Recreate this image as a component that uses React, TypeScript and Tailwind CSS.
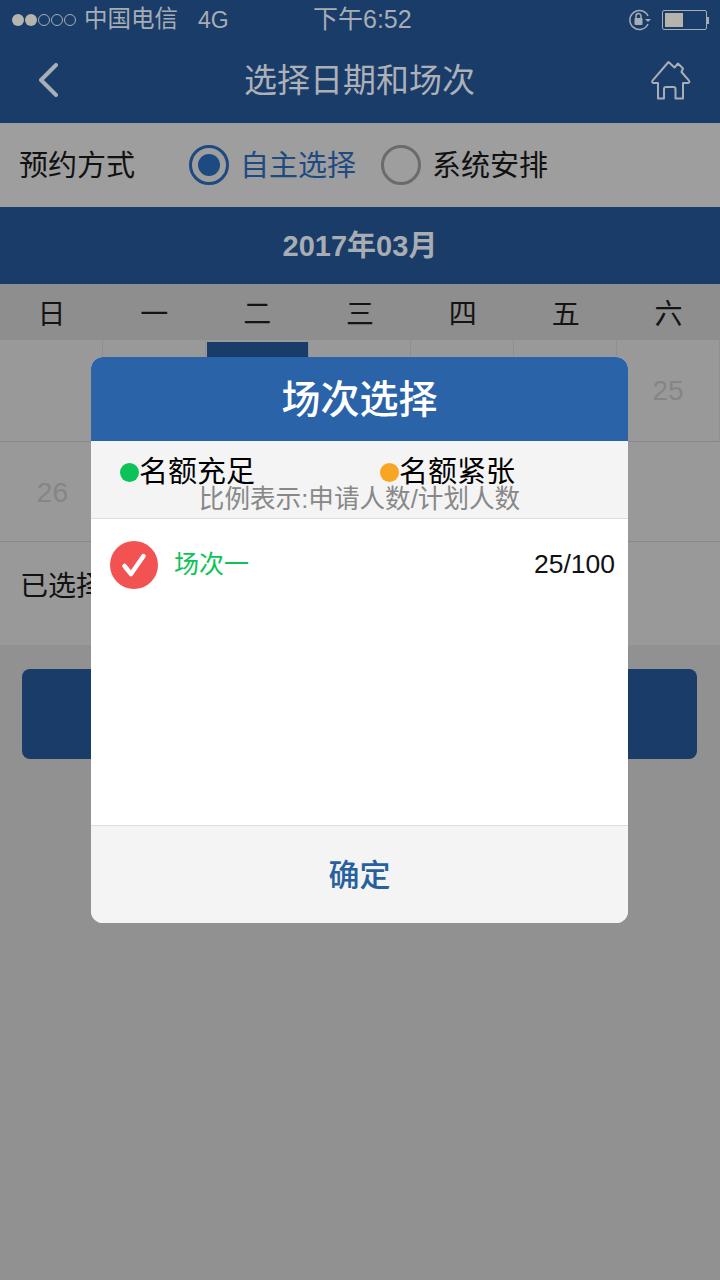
import React from "react";

const font = "font-['Liberation_Sans','Noto_Sans_CJK_SC',sans-serif]";
const weekDays = ["日", "一", "二", "三", "四", "五", "六"];

function StatusBar() {
  return (
    <div className="flex h-[40px] items-center pl-[12px] pr-[10px] text-[23.5px] text-[#a8adb4]">
      <div className="flex w-[301px] items-center">
        <div className="flex gap-[1px]">
          {[0, 1, 2, 3, 4].map((i) => (
            <span
              key={i}
              className={
                i < 2
                  ? "h-[12px] w-[12px] rounded-full bg-[#b5b5ad]"
                  : "h-[12px] w-[12px] rounded-full border border-[#a8adb4]"
              }
            />
          ))}
        </div>
        <span className="ml-[8px]">中国电信</span>
        <span className="ml-[20px] text-[23px]">4G</span>
      </div>
      <span className="text-[25px]">下午6:52</span>
      <div className="ml-auto flex items-center gap-[10px]">
        <svg width="24" height="22" viewBox="0 0 24 22" fill="none" stroke="#a8adb4" strokeWidth="1.5">
          <path d="M20 15a9.5 9.5 0 1 1 0-8" />
          <path d="M17 10h6l-3 3z" fill="#a8adb4" stroke="none" />
          <rect x="6.5" y="9" width="8" height="7" rx="1" fill="#a8adb4" stroke="none" />
          <path d="M8 9V7a2.5 2.5 0 0 1 5 0v2" />
        </svg>
        <div className="mr-[1px] flex items-center">
          <div className="h-[20px] w-[45px] rounded-[2px] border border-[#a8adb4] p-[2px]">
            <div className="h-full w-[18px] bg-[#b5b3aa]" />
          </div>
          <div className="h-[7px] w-[2px] bg-[#a8adb4]" />
        </div>
      </div>
    </div>
  );
}

function NavBar() {
  return (
    <div className="flex h-[82px] items-center justify-between pb-[2px] pl-[37px] pr-[29px]">
      <svg width="22" height="34" viewBox="0 0 22 34" fill="none" stroke="#a9aeb5" strokeWidth="4" strokeLinecap="round" strokeLinejoin="round">
        <path d="M19 2 4 17l15 15" />
      </svg>
      <h1 className="ml-[10px] mt-[2px] text-[33px] font-normal text-[#adb1b7]">选择日期和场次</h1>
      <svg width="41" height="40" viewBox="0 0 41 40" fill="none" stroke="#a9aeb5" strokeWidth="2" strokeLinejoin="round" strokeLinecap="round">
        <path d="M8 38.5V23H3.5a1.4 1.4 0 0 1-1-2.4L18.5 2l6 5.5 3.5-4 5 5-1.5 3.5 7.5 8.6a1.4 1.4 0 0 1-1 2.4H33v15.5h-7.5V29a2 2 0 0 0-2-2h-7.5a2 2 0 0 0-2 2v9.5z" />
      </svg>
    </div>
  );
}

function Radio({ checked }: { checked: boolean }) {
  return (
    <span
      className={
        checked
          ? "flex h-[40px] w-[40px] items-center justify-center rounded-full border-[3px] border-[#1d4a80]"
          : "h-[40px] w-[40px] rounded-full border-[3px] border-[#6b6b6b]"
      }
    >
      {checked && <span className="h-[22px] w-[22px] rounded-full bg-[#1d4a80]" />}
    </span>
  );
}

function Calendar() {
  return (
    <div>
      <div className="grid h-[56px] grid-cols-7 items-center bg-[#8e8e8e] pt-[5px] text-center text-[28px] text-[#141414]">
        {weekDays.map((d) => (
          <span key={d}>{d}</span>
        ))}
      </div>
      <div className="grid h-[102px] grid-cols-7 border-b border-[#888] bg-[#999999]">
        {["", "", "", "", "", "", "25"].map((d, i) => (
          <div
            key={i}
            className={
              "flex items-center justify-center border-r border-[#8f8f8f] text-[28px] text-[#858585] " +
              (i === 2 ? "ml-[1px] mt-[2px] bg-[#1a3c69] " : "")
            }
          >
            {d}
          </div>
        ))}
      </div>
      <div className="grid h-[100px] grid-cols-7 border-b border-[#888] bg-[#999999] text-[28px] text-[#858585]">
        <div className="flex items-center justify-center pl-[2px] pt-[2px]">26</div>
      </div>
    </div>
  );
}

function Modal() {
  return (
    <div className="absolute left-[91px] top-[357px] flex h-[566px] w-[537px] flex-col overflow-hidden rounded-[12px] bg-white">
      <div className="flex h-[84px] items-center justify-center bg-[#2b63a9] pt-[3px] text-[39px] font-medium text-white">
        场次选择
      </div>
      <div className="relative h-[78px] border-b border-[#dddddd] bg-[#f4f4f4]">
        <div className="flex pl-[29px] pt-[14px] text-[29px] leading-[34px] text-black">
          <div className="flex w-[260px] items-center">
            <span className="h-[19px] w-[19px] rounded-full bg-[#0bc356]" />
            <span>名额充足</span>
          </div>
          <div className="flex items-center">
            <span className="h-[19px] w-[19px] rounded-full bg-[#f9a524]" />
            <span>名额紧张</span>
          </div>
        </div>
        <p className="absolute inset-x-0 top-[43px] text-center text-[25.6px] leading-[30px] text-[#888888]">
          比例表示:申请人数/计划人数
        </p>
      </div>
      <div className="flex-1">
        <div className="flex items-center pl-[19px] pr-[13px] pt-[22px]">
          <span className="flex h-[48px] w-[48px] items-center justify-center rounded-full bg-[#f25352]">
            <svg width="26" height="26" viewBox="0 0 26 26" fill="none" stroke="white" strokeWidth="4.5" strokeLinecap="round" strokeLinejoin="round">
              <path d="M3.5 14 10 22 22.5 4" />
            </svg>
          </span>
          <span className="ml-[16px] text-[25px] text-[#0bc356]">场次一</span>
          <span className="ml-auto text-[26.5px] text-[#111111]">25/100</span>
        </div>
      </div>
      <div className="flex h-[98px] items-center justify-center border-t border-[#dddddd] bg-[#f4f4f4] pt-[3px] text-[31px] font-medium text-[#27609f]">
        确定
      </div>
    </div>
  );
}

export default function App() {
  return (
    <div className={"relative h-[1280px] w-[720px] overflow-hidden bg-[#919191] " + font}>
      <div className="h-[123px] bg-[#1a3c69]">
        <StatusBar />
        <NavBar />
      </div>

      <div className="flex h-[84px] items-center bg-[#9e9e9e] pl-[19px] text-[29px] text-[#111111]">
        <span className="w-[170px] pt-[3px]">预约方式</span>
        <Radio checked />
        <span className="ml-[11px] pt-[3px] text-[#1d4a80]">自主选择</span>
        <span className="ml-[25px]" />
        <Radio checked={false} />
        <span className="ml-[11px] pt-[3px]">系统安排</span>
      </div>

      <div className="flex h-[77px] items-center justify-center bg-[#1a3c69] pt-[3px] text-[29px] font-bold text-[#a8adb4]">
        2017年03月
      </div>

      <Calendar />

      <div className="flex h-[103px] items-center bg-[#999999] pb-[14px] pl-[20px] text-[28px] text-[#111111]">
        已选择
      </div>

      <div className="pl-[22px] pr-[23px] pt-[24px]">
        <div className="h-[90px] rounded-[8px] bg-[#1a3c69]" />
      </div>

      <Modal />
    </div>
  );
}
